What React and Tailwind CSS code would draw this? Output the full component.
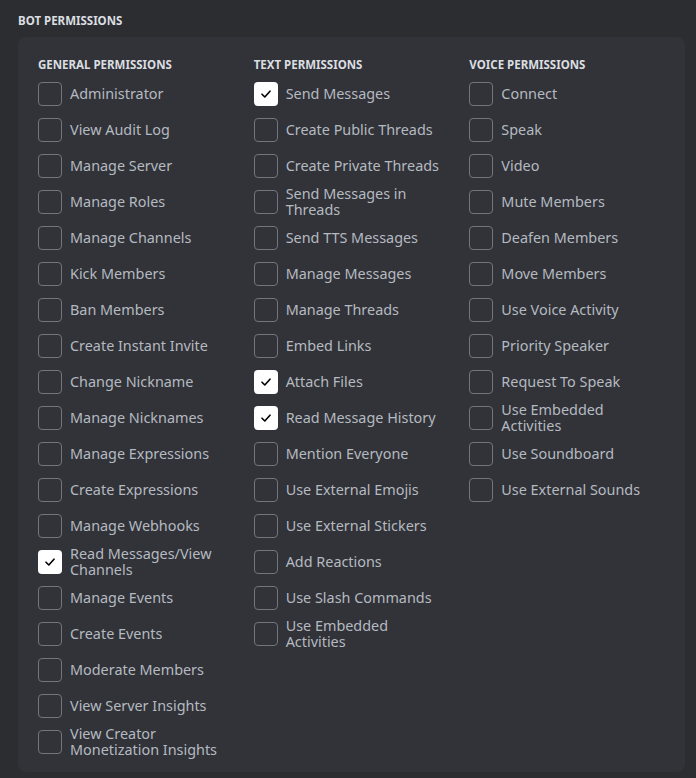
import React from "react";

const columns = [
  {
    title: "General Permissions",
    items: [
      ["Administrator"],
      ["View Audit Log"],
      ["Manage Server"],
      ["Manage Roles"],
      ["Manage Channels"],
      ["Kick Members"],
      ["Ban Members"],
      ["Create Instant Invite"],
      ["Change Nickname"],
      ["Manage Nicknames"],
      ["Manage Expressions"],
      ["Create Expressions"],
      ["Manage Webhooks"],
      ["Read Messages/View Channels", true],
      ["Manage Events"],
      ["Create Events"],
      ["Moderate Members"],
      ["View Server Insights"],
      ["View Creator Monetization Insights"],
    ],
  },
  {
    title: "Text Permissions",
    items: [
      ["Send Messages", true],
      ["Create Public Threads"],
      ["Create Private Threads"],
      ["Send Messages in Threads"],
      ["Send TTS Messages"],
      ["Manage Messages"],
      ["Manage Threads"],
      ["Embed Links"],
      ["Attach Files", true],
      ["Read Message History", true],
      ["Mention Everyone"],
      ["Use External Emojis"],
      ["Use External Stickers"],
      ["Add Reactions"],
      ["Use Slash Commands"],
      ["Use Embedded Activities"],
    ],
  },
  {
    title: "Voice Permissions",
    items: [
      ["Connect"],
      ["Speak"],
      ["Video"],
      ["Mute Members"],
      ["Deafen Members"],
      ["Move Members"],
      ["Use Voice Activity"],
      ["Priority Speaker"],
      ["Request To Speak"],
      ["Use Embedded Activities"],
      ["Use Soundboard"],
      ["Use External Sounds"],
    ],
  },
];

const Checkbox = ({ checked }) =>
  checked ? (
    <div className="w-6 h-6 shrink-0 rounded bg-white flex items-center justify-center">
      <svg width="12" height="12" viewBox="0 0 12 12" fill="none">
        <path d="M2 6.2 L4.8 9 L10 3.2" stroke="#000" strokeWidth="1.6" strokeLinecap="round" strokeLinejoin="round" />
      </svg>
    </div>
  ) : (
    <div className="w-6 h-6 shrink-0 rounded border border-[#72757d]" />
  );

const App = () => {
  return (
    <div
      className="w-[696px] h-[778px] bg-[#2b2d31] pl-[18px] pr-[11px] pt-[13px] overflow-hidden"
      style={{ fontFamily: '"Noto Sans", Roboto, sans-serif' }}
    >
      <div className="text-[11.5px] leading-4 font-bold uppercase text-[#dbdee1] h-6">
        Bot Permissions
      </div>
      <div className="bg-[#313338] rounded-lg pl-5 pt-5 pb-3 flex">
        {columns.map((col) => (
          <div key={col.title} className="w-[216px] flex flex-col">
            <div className="text-[11.5px] leading-4 font-bold uppercase text-[#dbdee1] mb-[3px]">
              {col.title}
            </div>
            {col.items.map(([label, checked]) => (
              <div key={label} className="h-9 flex items-center gap-2">
                <Checkbox checked={checked} />
                <span className="w-[160px] text-[14.4px] leading-4 text-[#b5bac1]">{label}</span>
              </div>
            ))}
          </div>
        ))}
      </div>
    </div>
  );
};

export default App;
